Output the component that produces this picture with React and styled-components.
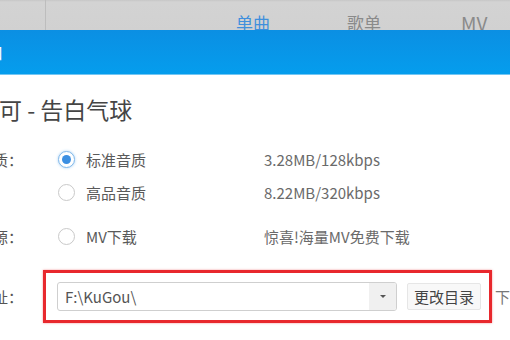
import React from 'react';
import styled, { createGlobalStyle } from 'styled-components';

const GlobalStyle = createGlobalStyle`
  html, body {
    margin: 0;
    padding: 0;
    background: #fff;
    overflow: hidden;
  }
  body {
    width: 510px;
    height: 340px;
    font-family: "Noto Sans CJK SC", "Noto Sans", sans-serif;
  }
`;

const qualityOptions = [
  { label: '标准音质', info: '3.28MB/128kbps', checked: true },
  { label: '高品音质', info: '8.22MB/320kbps', checked: false },
];

function Radio({ checked }) {
  return <RadioCircle checked={checked}>{checked ? <RadioDot /> : null}</RadioCircle>;
}

export default function App() {
  return (
    <>
      <GlobalStyle />
      <Page>
        <TabStrip>
          <TabSide />
          <Tabs>
            <Tab active>单曲</Tab>
            <Tab>歌单</Tab>
            <Tab latin>MV</Tab>
          </Tabs>
        </TabStrip>
        <TitleBar>
          <TitleText>下载窗口</TitleText>
        </TitleBar>
        <Body>
          <SongTitle>可 - 告白气球</SongTitle>
          <FormRow top={21}>
            <Label>
              <span>音质：</span>
            </Label>
            <OptionList>
              {qualityOptions.map(opt => (
                <OptionLine key={opt.label}>
                  <Option>
                    <Radio checked={opt.checked} />
                    <span>{opt.label}</span>
                  </Option>
                  <Info>{opt.info}</Info>
                </OptionLine>
              ))}
            </OptionList>
          </FormRow>
          <FormRow top={11}>
            <Label>
              <span>下载源：</span>
            </Label>
            <OptionList>
              <OptionLine>
                <Option>
                  <Radio />
                  <span>MV下载</span>
                </Option>
                <Info>惊喜!海量MV免费下载</Info>
              </OptionLine>
            </OptionList>
          </FormRow>
          <PathRow>
            <Label>
              <span>下载地址：</span>
            </Label>
            <Highlight>
              <PathSelect>
                <PathValue>F:\KuGou\</PathValue>
                <DropButton>
                  <Arrow />
                </DropButton>
              </PathSelect>
              <ChangeButton>更改目录</ChangeButton>
            </Highlight>
            <Trailing>下载</Trailing>
          </PathRow>
        </Body>
      </Page>
    </>
  );
}

const Page = styled.div`
  width: 510px;
  height: 340px;
  overflow: hidden;
  display: flex;
  flex-direction: column;
`;

const TabStrip = styled.div`
  height: 30px;
  display: flex;
  background: linear-gradient(#c6c6c6 0, #d3d3d3 2px, #d1d1d1 100%);
  flex-shrink: 0;
`;

const TabSide = styled.div`
  width: 45px;
  border-right: 1px solid #bdbdbd;
`;

const Tabs = styled.div`
  display: flex;
  align-items: flex-end;
  gap: 77px;
  margin-left: 190px;
`;

const Tab = styled.div`
  font-size: ${p => (p.latin ? '19px' : '17px')};
  line-height: 18px;
  height: 16px;
  margin-left: ${p => (p.latin ? '3px' : '0')};
  color: ${p => (p.active ? '#3f8fdc' : '#8a8a8a')};
  white-space: nowrap;
`;

const TitleBar = styled.div`
  height: 44px;
  flex-shrink: 0;
  display: flex;
  align-items: center;
  background: linear-gradient(#0b8fe3, #059ded);
  border-bottom: 1px solid #73c6f3;
  overflow: hidden;
`;

const TitleText = styled.div`
  color: #fff;
  font-size: 16px;
  margin-left: -61px;
  white-space: nowrap;
`;

const Body = styled.div`
  display: flex;
  flex-direction: column;
  padding-top: 21px;
`;

const SongTitle = styled.div`
  font-size: 23px;
  line-height: 26px;
  color: #454545;
  margin-left: -1px;
  white-space: nowrap;
`;

const FormRow = styled.div`
  display: flex;
  align-items: flex-start;
  margin-top: ${p => p.top}px;
`;

const Label = styled.div`
  width: 23px;
  flex-shrink: 0;
  display: flex;
  justify-content: flex-end;
  overflow: hidden;
  white-space: nowrap;
  font-size: 15px;
  line-height: 33px;
  color: #555;
`;

const OptionList = styled.div`
  display: flex;
  flex-direction: column;
`;

const OptionLine = styled.div`
  display: flex;
  align-items: center;
  height: 33px;
`;

const Option = styled.div`
  width: 206px;
  margin-left: 35px;
  display: flex;
  align-items: center;
  gap: 11px;
  font-size: 15px;
  color: #5a5a5a;
`;

const RadioCircle = styled.div`
  width: 15px;
  height: 15px;
  border-radius: 50%;
  border: 1px solid ${p => (p.checked ? '#82b9ea' : '#c9c9c9')};
  box-shadow: ${p => (p.checked ? '0 0 3px #a8d0f4' : 'none')};
  display: flex;
  align-items: center;
  justify-content: center;
  background: #fff;
`;

const RadioDot = styled.div`
  width: 9px;
  height: 9px;
  border-radius: 50%;
  background: #3b8fe2;
`;

const Info = styled.div`
  font-size: 15px;
  color: #6a6a6a;
  white-space: nowrap;
`;

const PathRow = styled.div`
  display: flex;
  align-items: center;
  margin-top: 17px;
`;

const Highlight = styled.div`
  flex-shrink: 0;
  margin-left: 20px;
  width: 432px;
  height: 47px;
  border: 3px solid #e8282d;
  box-shadow: 0 0 2px rgba(232, 40, 45, 0.5);
  display: flex;
  align-items: center;
  padding-left: 11px;
  gap: 10px;
  box-sizing: content-box;
`;

const PathSelect = styled.div`
  width: 338px;
  height: 27px;
  border: 1px solid #cfcfcf;
  border-radius: 3px;
  display: flex;
  align-items: center;
  overflow: hidden;
`;

const PathValue = styled.div`
  flex: 1;
  padding-left: 7px;
  font-size: 15px;
  color: #555;
`;

const DropButton = styled.div`
  width: 27px;
  height: 100%;
  background: #f0f0f0;
  display: flex;
  align-items: center;
  justify-content: center;
`;

const Arrow = styled.div`
  width: 0;
  height: 0;
  border-left: 3px solid transparent;
  border-right: 3px solid transparent;
  border-top: 3px solid #555;
`;

const ChangeButton = styled.div`
  height: 25px;
  padding: 0 6px;
  border: 1px solid #e6e6e6;
  border-radius: 2px;
  background: #f8f8f8;
  font-size: 15px;
  line-height: 25px;
  color: #444;
  white-space: nowrap;
`;

const Trailing = styled.div`
  margin-left: 3px;
  font-size: 15px;
  color: #777;
  white-space: nowrap;
`;
